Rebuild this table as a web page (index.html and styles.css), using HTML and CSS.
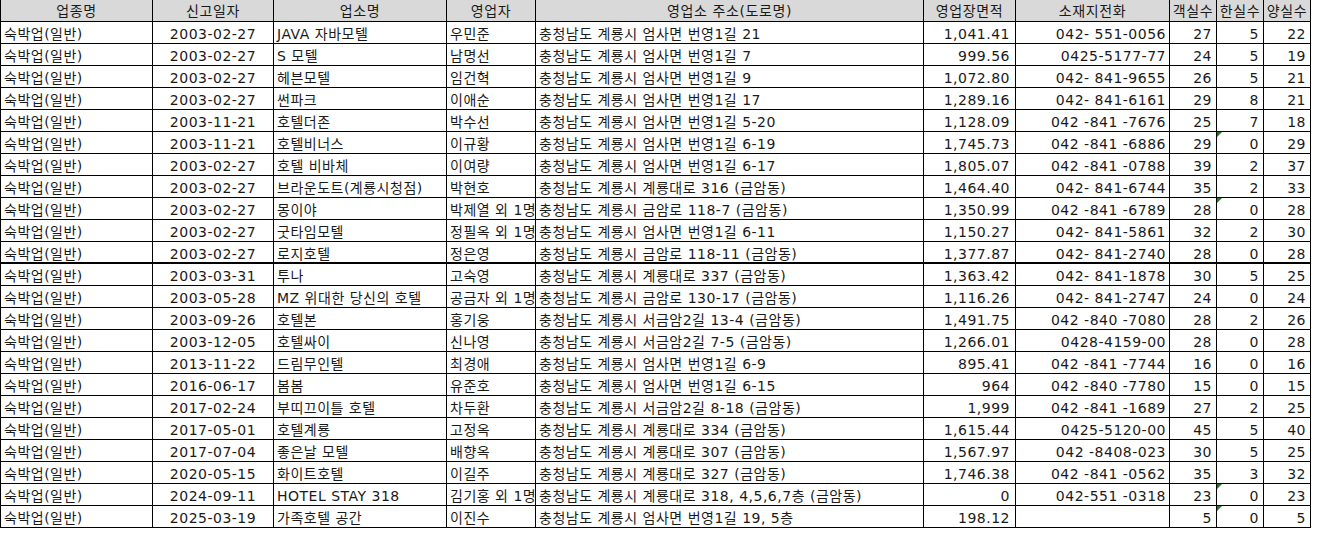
FILE: index.html
```html
<!DOCTYPE html>
<html lang="ko">
<head>
<meta charset="utf-8">
<title>숙박업 현황</title>
<link rel="stylesheet" href="styles.css">
</head>
<body>
<div class="sheet">
  <div class="row head">
    <div class="c h">업종명</div><div class="c h">신고일자</div><div class="c h">업소명</div><div class="c h">영업자</div><div class="c h">영업소 주소(도로명)</div><div class="c h">영업장면적</div><div class="c h">소재지전화</div><div class="c h">객실수</div><div class="c h">한실수</div><div class="c h">양실수</div>
  </div>
  <div class="row"><div class="c l">숙박업(일반)</div><div class="c m">2003-02-27</div><div class="c l">JAVA 자바모텔</div><div class="c l">우민준</div><div class="c l">충청남도 계룡시 엄사면 번영1길 21</div><div class="c r area">1,041.41</div><div class="c r tel">042- 551-0056</div><div class="c r">27</div><div class="c r">5</div><div class="c r">22</div></div>
  <div class="row"><div class="c l">숙박업(일반)</div><div class="c m">2003-02-27</div><div class="c l">S 모텔</div><div class="c l">남명선</div><div class="c l">충청남도 계룡시 엄사면 번영1길 7</div><div class="c r area">999.56</div><div class="c r tel">0425-5177-77</div><div class="c r">24</div><div class="c r">5</div><div class="c r">19</div></div>
  <div class="row"><div class="c l">숙박업(일반)</div><div class="c m">2003-02-27</div><div class="c l">헤븐모텔</div><div class="c l">임건혁</div><div class="c l">충청남도 계룡시 엄사면 번영1길 9</div><div class="c r area">1,072.80</div><div class="c r tel">042- 841-9655</div><div class="c r">26</div><div class="c r">5</div><div class="c r">21</div></div>
  <div class="row"><div class="c l">숙박업(일반)</div><div class="c m">2003-02-27</div><div class="c l">썬파크</div><div class="c l">이애순</div><div class="c l">충청남도 계룡시 엄사면 번영1길 17</div><div class="c r area">1,289.16</div><div class="c r tel">042- 841-6161</div><div class="c r">29</div><div class="c r">8</div><div class="c r">21</div></div>
  <div class="row"><div class="c l">숙박업(일반)</div><div class="c m">2003-11-21</div><div class="c l">호텔더존</div><div class="c l">박수선</div><div class="c l">충청남도 계룡시 엄사면 번영1길 5-20</div><div class="c r area">1,128.09</div><div class="c r tel">042 -841 -7676</div><div class="c r">25</div><div class="c r">7</div><div class="c r">18</div></div>
  <div class="row"><div class="c l">숙박업(일반)</div><div class="c m">2003-11-21</div><div class="c l">호텔비너스</div><div class="c l">이규황</div><div class="c l">충청남도 계룡시 엄사면 번영1길 6-19</div><div class="c r area">1,745.73</div><div class="c r tel">042 -841 -6886</div><div class="c r">29</div><div class="c r flag">0</div><div class="c r">29</div></div>
  <div class="row"><div class="c l">숙박업(일반)</div><div class="c m">2003-02-27</div><div class="c l">호텔 비바체</div><div class="c l">이여량</div><div class="c l">충청남도 계룡시 엄사면 번영1길 6-17</div><div class="c r area">1,805.07</div><div class="c r tel">042 -841 -0788</div><div class="c r">39</div><div class="c r">2</div><div class="c r">37</div></div>
  <div class="row"><div class="c l">숙박업(일반)</div><div class="c m">2003-02-27</div><div class="c l">브라운도트(계룡시청점)</div><div class="c l">박현호</div><div class="c l">충청남도 계룡시 계룡대로 316 (금암동)</div><div class="c r area">1,464.40</div><div class="c r tel">042- 841-6744</div><div class="c r">35</div><div class="c r">2</div><div class="c r">33</div></div>
  <div class="row"><div class="c l">숙박업(일반)</div><div class="c m">2003-02-27</div><div class="c l">몽이야</div><div class="c l">박제열 외 1명</div><div class="c l">충청남도 계룡시 금암로 118-7 (금암동)</div><div class="c r area">1,350.99</div><div class="c r tel">042 -841 -6789</div><div class="c r">28</div><div class="c r flag">0</div><div class="c r">28</div></div>
  <div class="row"><div class="c l">숙박업(일반)</div><div class="c m">2003-02-27</div><div class="c l">굿타임모텔</div><div class="c l">정필옥 외 1명</div><div class="c l">충청남도 계룡시 엄사면 번영1길 6-11</div><div class="c r area">1,150.27</div><div class="c r tel">042- 841-5861</div><div class="c r">32</div><div class="c r">2</div><div class="c r">30</div></div>
  <div class="row thick"><div class="c l">숙박업(일반)</div><div class="c m">2003-02-27</div><div class="c l">로지호텔</div><div class="c l">정은영</div><div class="c l">충청남도 계룡시 금암로 118-11 (금암동)</div><div class="c r area">1,377.87</div><div class="c r tel">042- 841-2740</div><div class="c r">28</div><div class="c r">0</div><div class="c r">28</div></div>
  <div class="row"><div class="c l">숙박업(일반)</div><div class="c m">2003-03-31</div><div class="c l">투나</div><div class="c l">고숙영</div><div class="c l">충청남도 계룡시 계룡대로 337 (금암동)</div><div class="c r area">1,363.42</div><div class="c r tel">042- 841-1878</div><div class="c r">30</div><div class="c r">5</div><div class="c r">25</div></div>
  <div class="row"><div class="c l">숙박업(일반)</div><div class="c m">2003-05-28</div><div class="c l">MZ 위대한 당신의 호텔</div><div class="c l">공금자 외 1명</div><div class="c l">충청남도 계룡시 금암로 130-17 (금암동)</div><div class="c r area">1,116.26</div><div class="c r tel">042- 841-2747</div><div class="c r">24</div><div class="c r">0</div><div class="c r">24</div></div>
  <div class="row"><div class="c l">숙박업(일반)</div><div class="c m">2003-09-26</div><div class="c l">호텔본</div><div class="c l">홍기웅</div><div class="c l">충청남도 계룡시 서금암2길 13-4 (금암동)</div><div class="c r area">1,491.75</div><div class="c r tel">042 -840 -7080</div><div class="c r">28</div><div class="c r">2</div><div class="c r">26</div></div>
  <div class="row"><div class="c l">숙박업(일반)</div><div class="c m">2003-12-05</div><div class="c l">호텔싸이</div><div class="c l">신나영</div><div class="c l">충청남도 계룡시 서금암2길 7-5 (금암동)</div><div class="c r area">1,266.01</div><div class="c r tel">0428-4159-00</div><div class="c r">28</div><div class="c r">0</div><div class="c r">28</div></div>
  <div class="row"><div class="c l">숙박업(일반)</div><div class="c m">2013-11-22</div><div class="c l">드림무인텔</div><div class="c l">최경애</div><div class="c l">충청남도 계룡시 엄사면 번영1길 6-9</div><div class="c r area">895.41</div><div class="c r tel">042 -841 -7744</div><div class="c r">16</div><div class="c r">0</div><div class="c r">16</div></div>
  <div class="row"><div class="c l">숙박업(일반)</div><div class="c m">2016-06-17</div><div class="c l">봄봄</div><div class="c l">유준호</div><div class="c l">충청남도 계룡시 엄사면 번영1길 6-15</div><div class="c r area">964</div><div class="c r tel">042 -840 -7780</div><div class="c r">15</div><div class="c r">0</div><div class="c r">15</div></div>
  <div class="row"><div class="c l">숙박업(일반)</div><div class="c m">2017-02-24</div><div class="c l">부띠끄이틀 호텔</div><div class="c l">차두환</div><div class="c l">충청남도 계룡시 서금암2길 8-18 (금암동)</div><div class="c r area">1,999</div><div class="c r tel">042 -841 -1689</div><div class="c r">27</div><div class="c r">2</div><div class="c r">25</div></div>
  <div class="row"><div class="c l">숙박업(일반)</div><div class="c m">2017-05-01</div><div class="c l">호텔계룡</div><div class="c l">고정옥</div><div class="c l">충청남도 계룡시 계룡대로 334 (금암동)</div><div class="c r area">1,615.44</div><div class="c r tel">0425-5120-00</div><div class="c r">45</div><div class="c r">5</div><div class="c r">40</div></div>
  <div class="row"><div class="c l">숙박업(일반)</div><div class="c m">2017-07-04</div><div class="c l">좋은날 모텔</div><div class="c l">배향옥</div><div class="c l">충청남도 계룡시 계룡대로 307 (금암동)</div><div class="c r area">1,567.97</div><div class="c r tel">042 -8408-023</div><div class="c r">30</div><div class="c r">5</div><div class="c r">25</div></div>
  <div class="row"><div class="c l">숙박업(일반)</div><div class="c m">2020-05-15</div><div class="c l">화이트호텔</div><div class="c l">이길주</div><div class="c l">충청남도 계룡시 계룡대로 327 (금암동)</div><div class="c r area">1,746.38</div><div class="c r tel">042 -841 -0562</div><div class="c r">35</div><div class="c r">3</div><div class="c r">32</div></div>
  <div class="row"><div class="c l">숙박업(일반)</div><div class="c m">2024-09-11</div><div class="c l">HOTEL STAY 318</div><div class="c l">김기홍 외 1명</div><div class="c l">충청남도 계룡시 계룡대로 318, 4,5,6,7층 (금암동)</div><div class="c r area">0</div><div class="c r tel">042-551 -0318</div><div class="c r">23</div><div class="c r flag">0</div><div class="c r">23</div></div>
  <div class="row"><div class="c l">숙박업(일반)</div><div class="c m">2025-03-19</div><div class="c l">가족호텔 공간</div><div class="c l">이진수</div><div class="c l">충청남도 계룡시 엄사면 번영1길 19, 5층</div><div class="c r area">198.12</div><div class="c r tel"></div><div class="c r">5</div><div class="c r flag">0</div><div class="c r">5</div></div>
</div>
</body>
</html>
```
FILE: styles.css
```css
html, body {
  margin: 0;
  padding: 0;
  background: #fff;
}
body {
  font-family: "DejaVu Sans", "Noto Sans CJK KR", sans-serif;
  font-size: 14px;
  letter-spacing: 0.5px;
  color: #1a1a1a;
}
.sheet {
  width: 1310px;
  border-left: 1px solid #000;
}
.row {
  display: grid;
  grid-template-columns: 152px 121px 173px 89px 388px 92px 154px 47px 47px 47px;
}
.c {
  position: relative;
  box-sizing: border-box;
  height: 22px;
  border-right: 1px solid #000;
  border-bottom: 1px solid #000;
  display: flex;
  align-items: flex-end;
  line-height: 16px;
  white-space: nowrap;
  overflow: hidden;
  padding: 0 3px 1px;
}
.thick .c {
  border-bottom-width: 2px;
  padding-bottom: 0;
}
.h {
  background: #d9d9d9;
  justify-content: center;
  padding: 0 0 2px;
  letter-spacing: 0.6px;
}
.l { justify-content: flex-start; }
.m { justify-content: center; }
.r { justify-content: flex-end; padding-right: 4px; }
.area { padding-right: 5px; }
.tel { padding-right: 3px; }
.flag::before {
  content: "";
  position: absolute;
  top: 0;
  left: 0;
  width: 0;
  height: 0;
  border-top: 5px solid #1f7a1f;
  border-right: 5px solid transparent;
}
```
